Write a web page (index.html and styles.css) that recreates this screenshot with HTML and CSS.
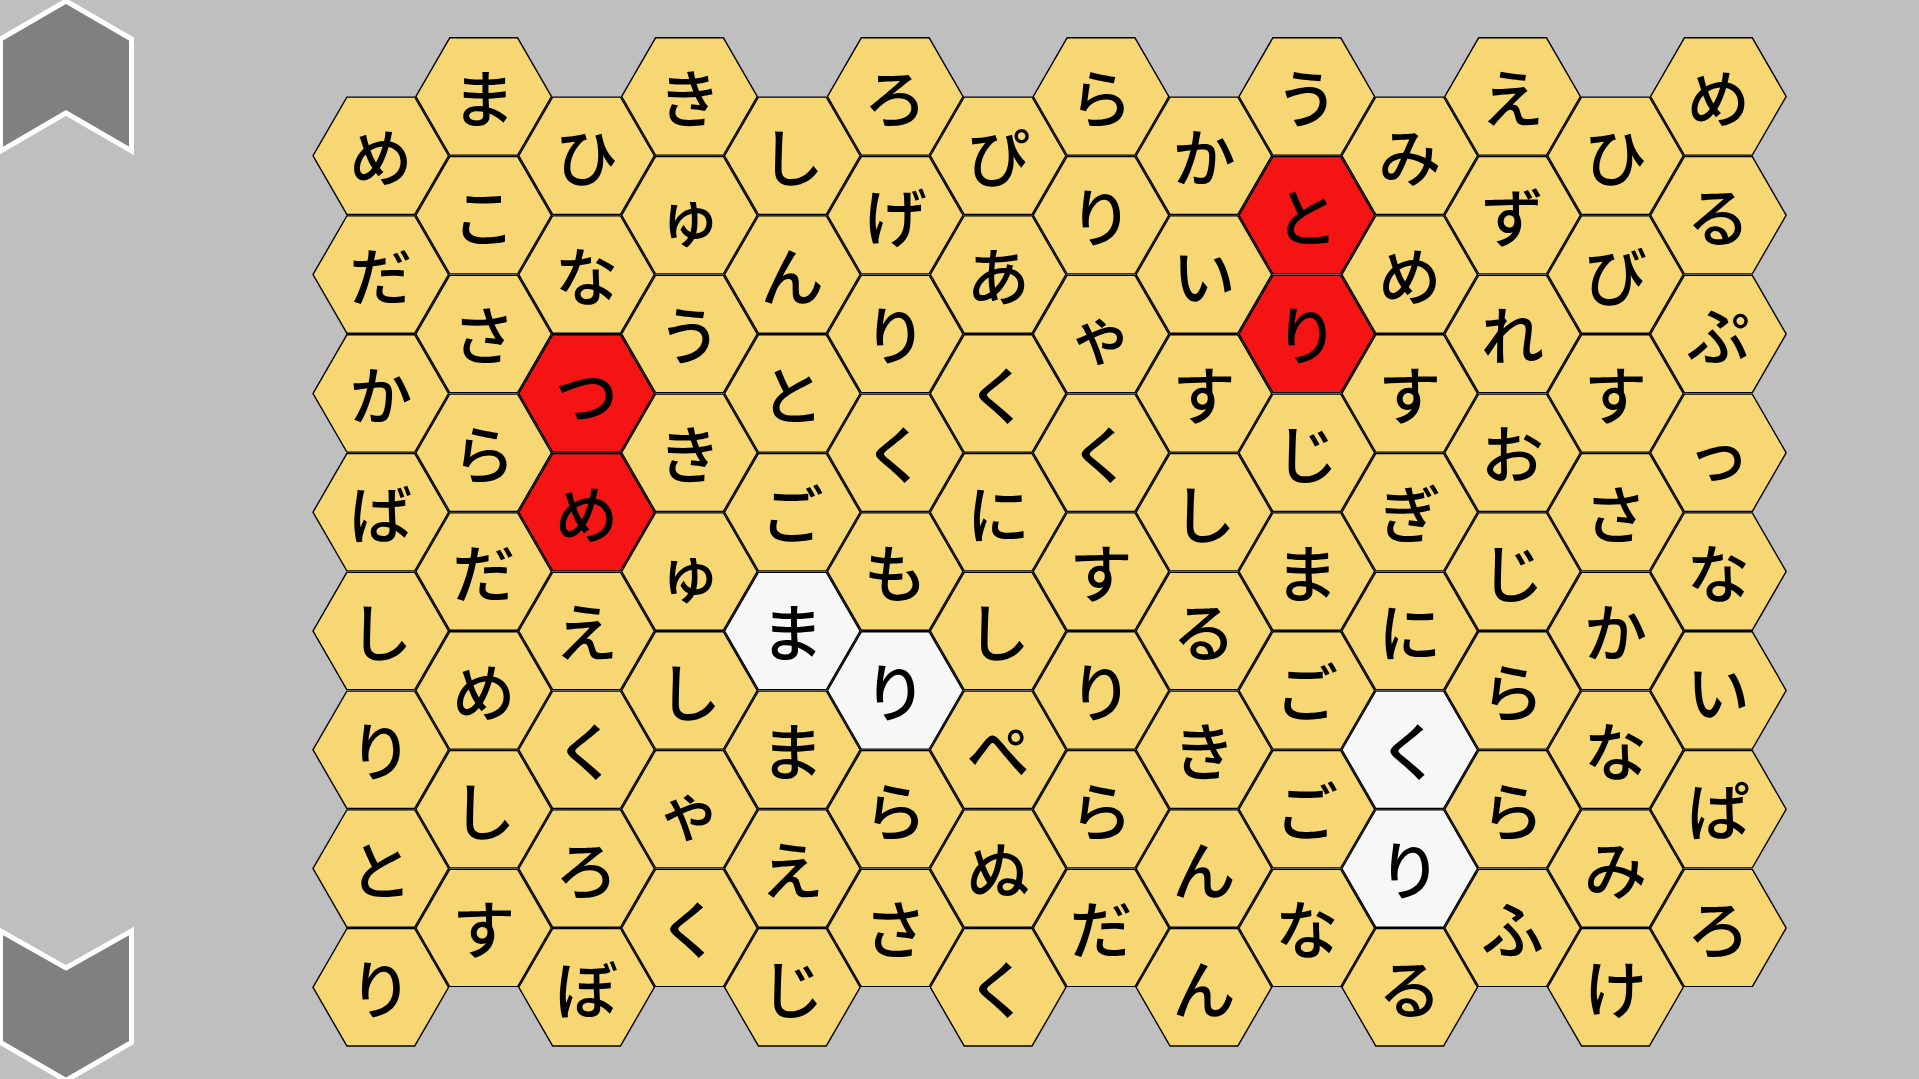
FILE: index.html
```html
<!DOCTYPE html>
<html lang="ja">
<head>
<meta charset="utf-8">
<title>Hex Words</title>
<link rel="stylesheet" href="styles.css">
</head>
<body>
<main class="screen">
  <nav class="side">
    <button class="nav-btn nav-up" aria-label="up">
      <svg width="134" height="156" viewBox="0 0 134 156"><polygon points="66,1 131.5,39 131.5,151 66,113 0.5,151 0.5,39"/></svg>
    </button>
    <button class="nav-btn nav-down" aria-label="down">
      <svg width="134" height="153" viewBox="0 0 134 153"><polygon points="0.5,5 66,42 131.5,5 131.5,116.5 66,154.5 0.5,116.5"/></svg>
    </button>
  </nav>
  <section class="board">
    <div class="col low">
      <div class="hex"><div class="face">め</div></div>
      <div class="hex"><div class="face">だ</div></div>
      <div class="hex"><div class="face">か</div></div>
      <div class="hex"><div class="face">ば</div></div>
      <div class="hex"><div class="face">し</div></div>
      <div class="hex"><div class="face">り</div></div>
      <div class="hex"><div class="face">と</div></div>
      <div class="hex"><div class="face">り</div></div>
    </div>
    <div class="col">
      <div class="hex"><div class="face">ま</div></div>
      <div class="hex"><div class="face">こ</div></div>
      <div class="hex"><div class="face">さ</div></div>
      <div class="hex"><div class="face">ら</div></div>
      <div class="hex"><div class="face">だ</div></div>
      <div class="hex"><div class="face">め</div></div>
      <div class="hex"><div class="face">し</div></div>
      <div class="hex"><div class="face">す</div></div>
    </div>
    <div class="col low">
      <div class="hex"><div class="face">ひ</div></div>
      <div class="hex"><div class="face">な</div></div>
      <div class="hex"><div class="face found">つ</div></div>
      <div class="hex"><div class="face found">め</div></div>
      <div class="hex"><div class="face">え</div></div>
      <div class="hex"><div class="face">く</div></div>
      <div class="hex"><div class="face">ろ</div></div>
      <div class="hex"><div class="face">ぼ</div></div>
    </div>
    <div class="col">
      <div class="hex"><div class="face">き</div></div>
      <div class="hex"><div class="face">ゅ</div></div>
      <div class="hex"><div class="face">う</div></div>
      <div class="hex"><div class="face">き</div></div>
      <div class="hex"><div class="face">ゅ</div></div>
      <div class="hex"><div class="face">し</div></div>
      <div class="hex"><div class="face">ゃ</div></div>
      <div class="hex"><div class="face">く</div></div>
    </div>
    <div class="col low">
      <div class="hex"><div class="face">し</div></div>
      <div class="hex"><div class="face">ん</div></div>
      <div class="hex"><div class="face">と</div></div>
      <div class="hex"><div class="face">ご</div></div>
      <div class="hex"><div class="face picked">ま</div></div>
      <div class="hex"><div class="face">ま</div></div>
      <div class="hex"><div class="face">え</div></div>
      <div class="hex"><div class="face">じ</div></div>
    </div>
    <div class="col">
      <div class="hex"><div class="face">ろ</div></div>
      <div class="hex"><div class="face">げ</div></div>
      <div class="hex"><div class="face">り</div></div>
      <div class="hex"><div class="face">く</div></div>
      <div class="hex"><div class="face">も</div></div>
      <div class="hex"><div class="face picked">り</div></div>
      <div class="hex"><div class="face">ら</div></div>
      <div class="hex"><div class="face">さ</div></div>
    </div>
    <div class="col low">
      <div class="hex"><div class="face">ぴ</div></div>
      <div class="hex"><div class="face">あ</div></div>
      <div class="hex"><div class="face">く</div></div>
      <div class="hex"><div class="face">に</div></div>
      <div class="hex"><div class="face">し</div></div>
      <div class="hex"><div class="face">ぺ</div></div>
      <div class="hex"><div class="face">ぬ</div></div>
      <div class="hex"><div class="face">く</div></div>
    </div>
    <div class="col">
      <div class="hex"><div class="face">ら</div></div>
      <div class="hex"><div class="face">り</div></div>
      <div class="hex"><div class="face">ゃ</div></div>
      <div class="hex"><div class="face">く</div></div>
      <div class="hex"><div class="face">す</div></div>
      <div class="hex"><div class="face">り</div></div>
      <div class="hex"><div class="face">ら</div></div>
      <div class="hex"><div class="face">だ</div></div>
    </div>
    <div class="col low">
      <div class="hex"><div class="face">か</div></div>
      <div class="hex"><div class="face">い</div></div>
      <div class="hex"><div class="face">す</div></div>
      <div class="hex"><div class="face">し</div></div>
      <div class="hex"><div class="face">る</div></div>
      <div class="hex"><div class="face">き</div></div>
      <div class="hex"><div class="face">ん</div></div>
      <div class="hex"><div class="face">ん</div></div>
    </div>
    <div class="col">
      <div class="hex"><div class="face">う</div></div>
      <div class="hex"><div class="face found">と</div></div>
      <div class="hex"><div class="face found">り</div></div>
      <div class="hex"><div class="face">じ</div></div>
      <div class="hex"><div class="face">ま</div></div>
      <div class="hex"><div class="face">ご</div></div>
      <div class="hex"><div class="face">ご</div></div>
      <div class="hex"><div class="face">な</div></div>
    </div>
    <div class="col low">
      <div class="hex"><div class="face">み</div></div>
      <div class="hex"><div class="face">め</div></div>
      <div class="hex"><div class="face">す</div></div>
      <div class="hex"><div class="face">ぎ</div></div>
      <div class="hex"><div class="face">に</div></div>
      <div class="hex"><div class="face picked">く</div></div>
      <div class="hex"><div class="face picked">り</div></div>
      <div class="hex"><div class="face">る</div></div>
    </div>
    <div class="col">
      <div class="hex"><div class="face">え</div></div>
      <div class="hex"><div class="face">ず</div></div>
      <div class="hex"><div class="face">れ</div></div>
      <div class="hex"><div class="face">お</div></div>
      <div class="hex"><div class="face">じ</div></div>
      <div class="hex"><div class="face">ら</div></div>
      <div class="hex"><div class="face">ら</div></div>
      <div class="hex"><div class="face">ふ</div></div>
    </div>
    <div class="col low">
      <div class="hex"><div class="face">ひ</div></div>
      <div class="hex"><div class="face">び</div></div>
      <div class="hex"><div class="face">す</div></div>
      <div class="hex"><div class="face">さ</div></div>
      <div class="hex"><div class="face">か</div></div>
      <div class="hex"><div class="face">な</div></div>
      <div class="hex"><div class="face">み</div></div>
      <div class="hex"><div class="face">け</div></div>
    </div>
    <div class="col">
      <div class="hex"><div class="face">め</div></div>
      <div class="hex"><div class="face">る</div></div>
      <div class="hex"><div class="face">ぷ</div></div>
      <div class="hex"><div class="face">っ</div></div>
      <div class="hex"><div class="face">な</div></div>
      <div class="hex"><div class="face">い</div></div>
      <div class="hex"><div class="face">ぱ</div></div>
      <div class="hex"><div class="face">ろ</div></div>
    </div>
  </section>
</main>
</body>
</html>
```

FILE: styles.css
```css
html, body {
  margin: 0;
  padding: 0;
  background: #bfbfbf;
}

.screen {
  width: 1919px;
  height: 1079px;
  overflow: hidden;
  display: flex;
  flex-direction: row;
  align-items: flex-start;
  font-family: "Noto Sans CJK JP", "Noto Sans", sans-serif;
}

.side {
  width: 134px;
  height: 1079px;
  display: flex;
  flex-direction: column;
  justify-content: space-between;
  flex: none;
}

.nav-btn {
  display: block;
  margin: 0;
  padding: 0;
  border: 0;
  background: none;
  cursor: pointer;
  line-height: 0;
}

.nav-btn svg {
  display: block;
}

.nav-btn polygon {
  fill: #808080;
  stroke: #ffffff;
  stroke-width: 5;
  stroke-linejoin: miter;
}

.board {
  margin-left: 178.2px;
  padding-top: 37px;
  display: flex;
  flex-direction: row;
  align-items: flex-start;
  flex: none;
}

.col {
  display: flex;
  flex-direction: column;
}

.col + .col {
  margin-left: -34.3px;
}

.col.low {
  margin-top: 59.4px;
}

.hex {
  width: 137.2px;
  height: 118.8px;
  background: #000000;
  clip-path: polygon(25% 0, 75% 0, 100% 50%, 75% 100%, 25% 100%, 0 50%);
}

.face {
  width: 100%;
  height: 100%;
  background: #f7d674;
  clip-path: polygon(
    calc(25% + 0.8px) 1.4px,
    calc(75% - 0.8px) 1.4px,
    calc(100% - 1.6px) 50%,
    calc(75% - 0.8px) calc(100% - 1.4px),
    calc(25% + 0.8px) calc(100% - 1.4px),
    1.6px 50%
  );
  display: flex;
  align-items: center;
  justify-content: center;
  box-sizing: border-box;
  padding-bottom: 4px;
  font-size: 63px;
  font-weight: 500;
  line-height: 1;
  color: #000000;
}

.face.found {
  background: #f41414;
}

.face.picked {
  background: #f7f7f7;
}
```
